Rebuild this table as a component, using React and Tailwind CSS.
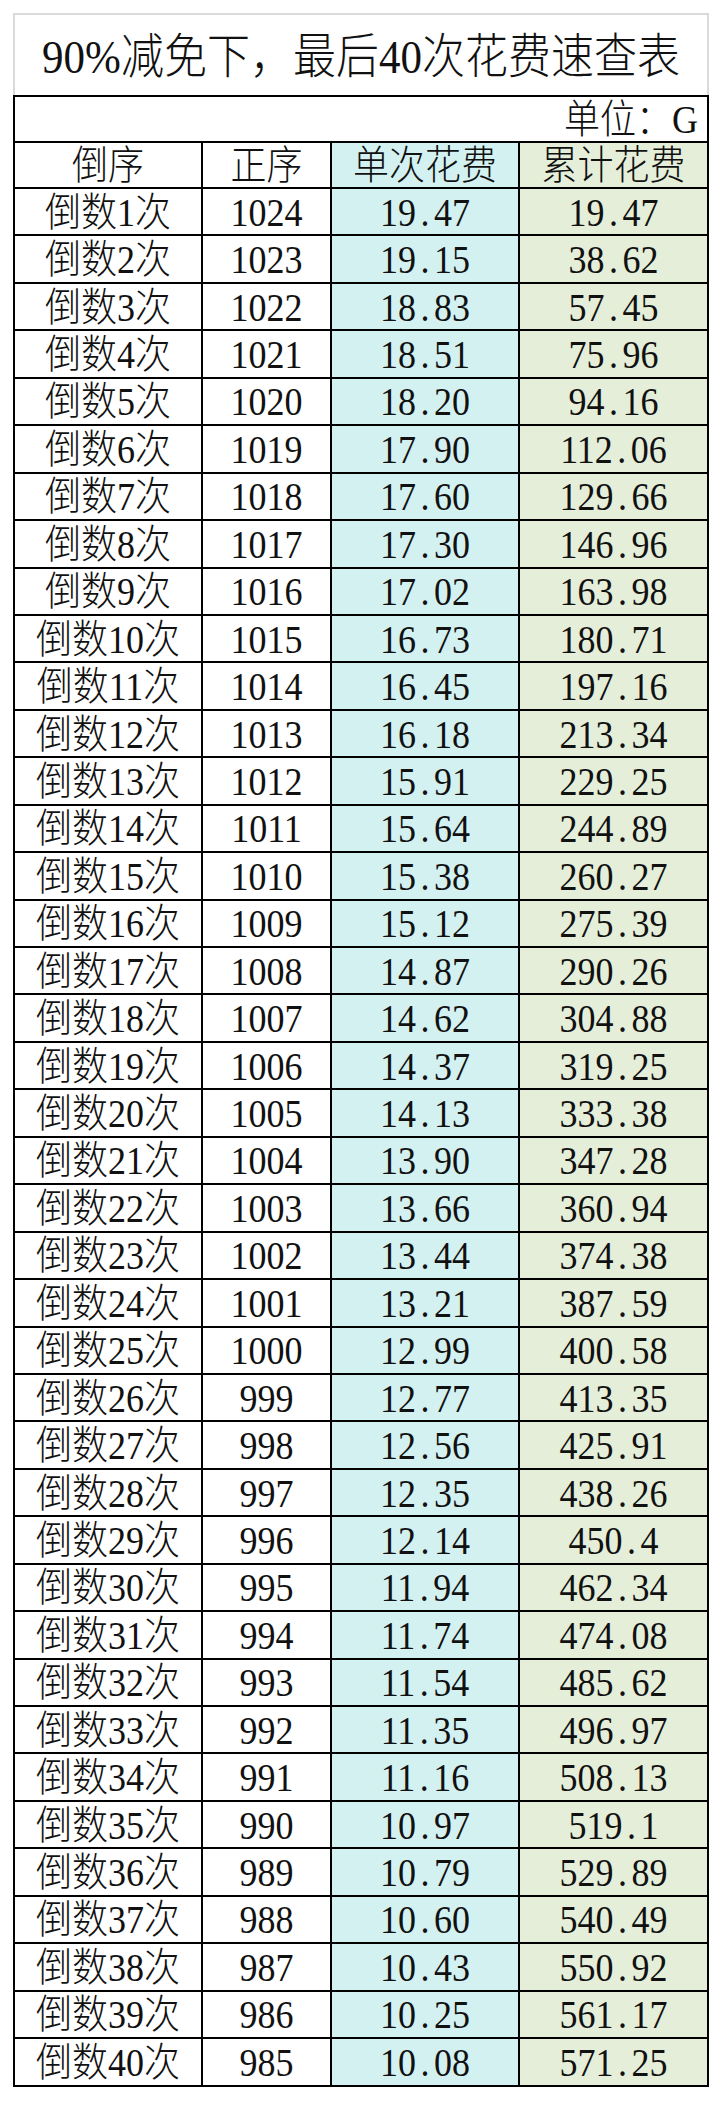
import React from "react";

// 单次花费 / 累计花费，倒数第 1 ~ 40 次
const single = [
  "19.47", "19.15", "18.83", "18.51", "18.20", "17.90", "17.60", "17.30", "17.02", "16.73",
  "16.45", "16.18", "15.91", "15.64", "15.38", "15.12", "14.87", "14.62", "14.37", "14.13",
  "13.90", "13.66", "13.44", "13.21", "12.99", "12.77", "12.56", "12.35", "12.14", "11.94",
  "11.74", "11.54", "11.35", "11.16", "10.97", "10.79", "10.60", "10.43", "10.25", "10.08",
];

const total = [
  "19.47", "38.62", "57.45", "75.96", "94.16", "112.06", "129.66", "146.96", "163.98", "180.71",
  "197.16", "213.34", "229.25", "244.89", "260.27", "275.39", "290.26", "304.88", "319.25", "333.38",
  "347.28", "360.94", "374.38", "387.59", "400.58", "413.35", "425.91", "438.26", "450.4", "462.34",
  "474.08", "485.62", "496.97", "508.13", "519.1", "529.89", "540.49", "550.92", "561.17", "571.25",
];

const rows = single.map((s, i) => ({
  label: `倒数${i + 1}次`,
  order: 1024 - i,
  single: s,
  total: total[i],
}));

const FONT = { fontFamily: '"Liberation Serif", "Noto Sans CJK SC", serif' };

// 小数点按半角宽度显示（表格原样式）
function Num({ value }) {
  const [a, b] = value.split(".");
  return (
    <span>
      {a}
      <span className="inline-block w-[18px] text-center">.</span>
      {b}
    </span>
  );
}

function Cell({ w, bg = "bg-white", children }) {
  return (
    <div
      className={`${w} ${bg} h-full shrink-0 flex items-center justify-center border-r-2 border-black whitespace-nowrap`}
    >
      <span className="inline-block scale-y-[1.1] pt-[2px]">{children}</span>
    </div>
  );
}

export default function App() {
  return (
    <div className="bg-white min-h-[2101px] pt-[13px] pl-[13px] text-[#111] font-light" style={FONT}>
      <div className="w-[696px]">
        {/* 标题 */}
        <div className="h-[82px] border-t-2 border-x-2 border-[#dadada] flex items-center justify-center text-[43px] leading-none">
          <span className="inline-block scale-y-[1.1] pt-[2px]">90%减免下，最后40次花费速查表</span>
        </div>

        <div className="border-l-2 border-t-2 border-black text-[36px] leading-none">
          {/* 单位 */}
          <div className="h-[46px] border-b-2 border-r-2 border-black flex items-center justify-end pr-[9px]">
            <span className="inline-block scale-y-[1.1] pt-[2px]">单位：G</span>
          </div>

          {/* 表头 */}
          <div className="h-[46px] border-b-2 border-black flex">
            <Cell w="w-[188px]">倒序</Cell>
            <Cell w="w-[129px]">正序</Cell>
            <Cell w="w-[188px]" bg="bg-[#d4f1f1]">单次花费</Cell>
            <Cell w="w-[189px]" bg="bg-[#e5eed9]">累计花费</Cell>
          </div>

          {rows.map((r) => (
            <div key={r.label} className="h-[47.45px] border-b-2 border-black flex">
              <Cell w="w-[188px]">{r.label}</Cell>
              <Cell w="w-[129px]">{r.order}</Cell>
              <Cell w="w-[188px]" bg="bg-[#d4f1f1]">
                <Num value={r.single} />
              </Cell>
              <Cell w="w-[189px]" bg="bg-[#e5eed9]">
                <Num value={r.total} />
              </Cell>
            </div>
          ))}
        </div>
      </div>
    </div>
  );
}
